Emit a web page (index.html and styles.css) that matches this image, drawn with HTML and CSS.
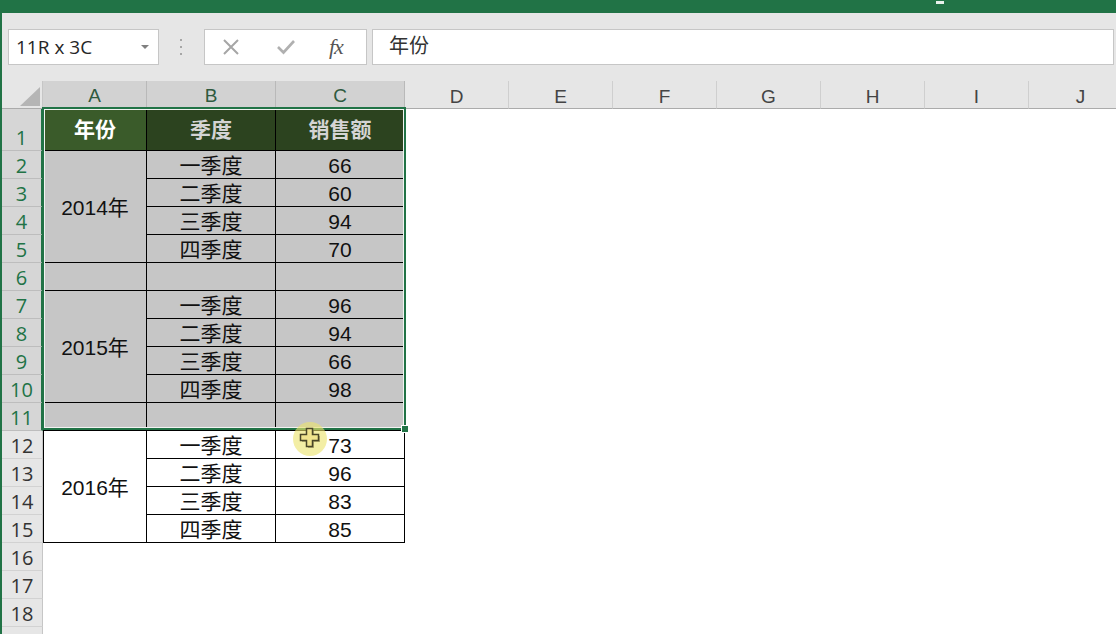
FILE: index.html
```html
<!DOCTYPE html>
<html lang="zh-CN">
<head>
  <meta charset="UTF-8">
  <meta name="viewport" content="width=device-width, initial-scale=1.0">
  <title>销售额 - Excel</title>
  <link rel="stylesheet" href="styles.css">
</head>
<body>
  <!-- 顶部绿色标题栏 -->
  <div class="titlebar"><span class="min-mark"></span></div>

  <!-- 编辑栏 -->
  <div class="formula-bar">
    <div class="name-box">
      <span>11R x 3C</span>
      <span class="drop"></span>
    </div>
    <div class="grip"><i></i><i></i><i></i></div>
    <div class="fx-box">
      <svg class="btn-icon" width="20" height="20" viewBox="0 0 20 20">
        <path d="M3 3 L17 17 M17 3 L3 17" stroke="#a6a6a6" stroke-width="2" fill="none"/>
      </svg>
      <svg class="btn-icon" width="20" height="20" viewBox="0 0 20 20">
        <path d="M2 10 L7.5 15.5 L18 4" stroke="#b0b0b0" stroke-width="2.6" fill="none"/>
      </svg>
      <span class="fx">fx</span>
    </div>
    <div class="formula-input">年份</div>
  </div>

  <!-- 工作表 -->
  <div class="sheet-wrap">
    <table class="sheet">
      <colgroup>
        <col class="c-rh">
        <col class="c-a">
        <col class="c-b">
        <col class="c-c">
        <col class="c-n"><col class="c-n"><col class="c-n"><col class="c-n">
        <col class="c-n"><col class="c-n"><col class="c-n">
      </colgroup>
      <tr class="hdr">
        <th class="corner">
          <svg width="20" height="19" viewBox="0 0 20 19"><path d="M20 0 V19 H0 Z" fill="#b5b5b5"/></svg>
        </th>
        <th class="ch sel">A</th>
        <th class="ch sel">B</th>
        <th class="ch sel">C</th>
        <th class="ch">D</th>
        <th class="ch">E</th>
        <th class="ch">F</th>
        <th class="ch">G</th>
        <th class="ch">H</th>
        <th class="ch">I</th>
        <th class="ch">J</th>
      </tr>
      <tr class="r1">
        <th class="rh sel first">1</th>
        <td class="t act a">年份</td>
        <td class="t">季度</td>
        <td class="t">销售额</td>
      </tr>
      <tr>
        <th class="rh sel">2</th>
        <td class="d s a" rowspan="4">2014年</td>
        <td class="d s">一季度</td>
        <td class="d s">66</td>
      </tr>
      <tr>
        <th class="rh sel">3</th>
        <td class="d s">二季度</td>
        <td class="d s">60</td>
      </tr>
      <tr>
        <th class="rh sel">4</th>
        <td class="d s">三季度</td>
        <td class="d s">94</td>
      </tr>
      <tr>
        <th class="rh sel">5</th>
        <td class="d s">四季度</td>
        <td class="d s">70</td>
      </tr>
      <tr>
        <th class="rh sel">6</th>
        <td class="d s a"></td>
        <td class="d s"></td>
        <td class="d s"></td>
      </tr>
      <tr>
        <th class="rh sel">7</th>
        <td class="d s a" rowspan="4">2015年</td>
        <td class="d s">一季度</td>
        <td class="d s">96</td>
      </tr>
      <tr>
        <th class="rh sel">8</th>
        <td class="d s">二季度</td>
        <td class="d s">94</td>
      </tr>
      <tr>
        <th class="rh sel">9</th>
        <td class="d s">三季度</td>
        <td class="d s">66</td>
      </tr>
      <tr>
        <th class="rh sel">10</th>
        <td class="d s">四季度</td>
        <td class="d s">98</td>
      </tr>
      <tr>
        <th class="rh sel">11</th>
        <td class="d s a"></td>
        <td class="d s"></td>
        <td class="d s"></td>
      </tr>
      <tr>
        <th class="rh">12</th>
        <td class="d a" rowspan="4">2016年</td>
        <td class="d">一季度</td>
        <td class="d">73</td>
      </tr>
      <tr>
        <th class="rh">13</th>
        <td class="d">二季度</td>
        <td class="d">96</td>
      </tr>
      <tr>
        <th class="rh">14</th>
        <td class="d">三季度</td>
        <td class="d">83</td>
      </tr>
      <tr>
        <th class="rh">15</th>
        <td class="d">四季度</td>
        <td class="d">85</td>
      </tr>
      <tr><th class="rh">16</th></tr>
      <tr><th class="rh">17</th></tr>
      <tr><th class="rh">18</th></tr>
      <tr><th class="rh"></th></tr>
    </table>

    <!-- 选区边框 -->
    <div class="selection"><span class="handle"></span></div>

    <!-- 鼠标指针 -->
    <div class="cursor">
      <svg width="22" height="22" viewBox="0 0 22 22">
        <path d="M9 3 H15 V9 H21 V15 H15 V21 H9 V15 H3 V9 H9 Z" fill="#8a8250" opacity="0.6"/>
        <path d="M7.5 1.5 H13.5 V7.5 H19.5 V13.5 H13.5 V19.5 H7.5 V13.5 H1.5 V7.5 H7.5 Z" fill="#f0e48e" stroke="#4a4628" stroke-width="1.5"/>
      </svg>
    </div>
  </div>
</body>
</html>
```

FILE: styles.css
```css
html, body {
  margin: 0;
  padding: 0;
}
body {
  width: 1116px;
  height: 634px;
  overflow: hidden;
  box-sizing: border-box;
  border-left: 2px solid #217346;
  background: #fff;
  font-family: "Liberation Sans", "Noto Sans CJK SC", sans-serif;
}

/* 标题栏 */
.titlebar {
  height: 13px;
  background: #217346;
  display: flex;
}
.min-mark {
  margin-left: 934px;
  margin-top: 1px;
  width: 8px;
  height: 3px;
  background: #e8f1ec;
}

/* 编辑栏 */
.formula-bar {
  height: 68px;
  box-sizing: border-box;
  padding-top: 16px;
  background: #e6e6e6;
  display: flex;
  align-items: flex-start;
}
.name-box {
  margin-left: 6px;
  width: 151px;
  height: 36px;
  box-sizing: border-box;
  background: #fff;
  border: 1px solid #c6c6c6;
  display: flex;
  align-items: center;
  justify-content: space-between;
  padding: 0 9px 0 7px;
  font-family: "Open Sans", sans-serif;
  font-size: 19px;
  color: #262626;
}
.drop {
  width: 0;
  height: 0;
  border-left: 4px solid transparent;
  border-right: 4px solid transparent;
  border-top: 4px solid #808080;
}
.grip {
  margin-left: 21px;
  margin-top: 10px;
  display: flex;
  flex-direction: column;
  gap: 5px;
}
.grip i {
  display: block;
  width: 2px;
  height: 2px;
  background: #a6a6a6;
}
.fx-box {
  margin-left: 22px;
  width: 163px;
  height: 36px;
  box-sizing: border-box;
  background: #fff;
  border: 1px solid #c6c6c6;
  display: flex;
  align-items: center;
  padding-left: 16px;
  gap: 35px;
}
.fx {
  font-family: "Liberation Serif", serif;
  font-style: italic;
  font-size: 22px;
  color: #555;
  letter-spacing: -1px;
  margin-left: -2px;
}
.formula-input {
  margin-left: 5px;
  margin-right: 2px;
  flex: 1;
  height: 36px;
  box-sizing: border-box;
  background: #fff;
  border: 1px solid #c6c6c6;
  padding-left: 16px;
  line-height: 33px;
  font-size: 20px;
  color: #333;
}

/* 工作表 */
.sheet-wrap {
  position: relative;
}
.sheet {
  border-collapse: separate;
  border-spacing: 0;
  table-layout: fixed;
  width: 1131px;
}
.c-rh { width: 41px; }
.c-a { width: 104px; }
.c-b, .c-c { width: 129px; }
.c-n { width: 104px; }

.sheet th, .sheet td {
  padding: 0;
  text-align: center;
  vertical-align: middle;
  overflow: hidden;
  white-space: nowrap;
  line-height: 22px;
}
.sheet tr { height: 28px; }
.sheet tr.hdr { height: 27px; }
.sheet tr.r1 { height: 42px; }

.corner {
  background: #e6e6e6;
  border-right: 1px solid #c6c6c6;
  border-bottom: 1px solid #ababab;
  text-align: right !important;
  vertical-align: bottom !important;
}
.corner svg {
  display: block;
  margin: 0 2px 2px auto;
}
.ch {
  background: #e6e6e6;
  border-right: 1px solid #cfcfcf;
  border-bottom: 1px solid #ababab;
  font-family: "Liberation Sans", sans-serif;
  font-weight: normal;
  font-size: 19px;
  color: #444;
  padding-top: 4px !important;
}
.ch.sel {
  background: #d2d2d2;
  color: #2f5a3f;
  border-bottom: 2px solid #217346;
  border-right-color: #b9b9b9;
}
.rh {
  background: #e6e6e6;
  border-right: 1px solid #c6c6c6;
  border-bottom: 1px solid #d2d2d2;
  font-family: "Open Sans", sans-serif;
  font-weight: normal;
  font-size: 20px;
  color: #333;
  padding-top: 2px !important;
}
.rh.sel {
  background: #d6d6d6;
  color: #217346;
  border-right: 2px solid #217346;
  border-bottom-color: #bdbdbd;
}
.rh.first {
  vertical-align: bottom !important;
  padding-bottom: 1px !important;
}

/* 表格内容 */
.t {
  background: #2c431f;
  color: #d4d4d4;
  font-weight: bold;
  font-size: 21px;
  border-right: 1px solid #000;
  border-bottom: 1px solid #000;
}
.t.act {
  background: #3a5b2a;
  color: #fff;
}
.d {
  font-size: 21px;
  color: #111;
  border-right: 1px solid #000;
  border-bottom: 1px solid #000;
  padding-top: 3px !important;
}
.a { border-left: 1px solid #000; }
.d.s { background: #c6c6c6; }

/* 选区 */
.selection {
  position: absolute;
  left: 40px;
  top: 26px;
  width: 364px;
  height: 323px;
  box-sizing: border-box;
  border: 2px solid #217346;
  box-shadow: inset 0 0 0 1px #f2f2f2;
}
.handle {
  position: absolute;
  right: -5px;
  bottom: -5px;
  width: 6px;
  height: 6px;
  background: #217346;
  border: 1px solid #fff;
}
.cursor {
  position: absolute;
  left: 291px;
  top: 341px;
  width: 34px;
  height: 34px;
  border-radius: 50%;
  background: rgba(236, 228, 110, 0.62);
  display: flex;
  align-items: center;
  justify-content: center;
}
.cursor svg {
  margin: 0 0 2px 0;
}
```
